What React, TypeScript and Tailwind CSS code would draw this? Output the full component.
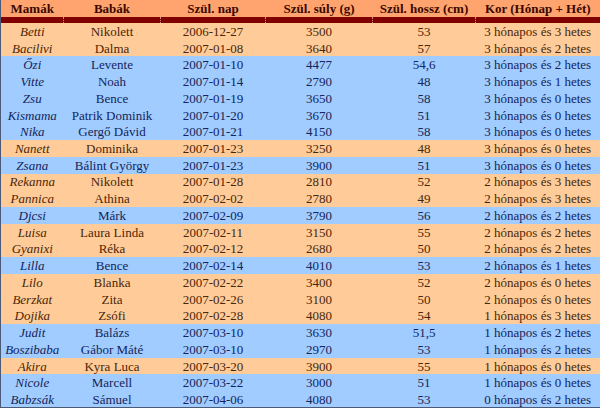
import React from 'react';

type Row = [string, string, string, string, string, string, boolean];

// last field: true = fiú (kék sor)
const rows: Row[] = [
    ['Betti', 'Nikolett', '2006-12-27', '3500', '53', '3 hónapos és 3 hetes', false],
    ['Bacilivi', 'Dalma', '2007-01-08', '3640', '57', '3 hónapos és 2 hetes', false],
    ['Őzi', 'Levente', '2007-01-10', '4477', '54,6', '3 hónapos és 2 hetes', true],
    ['Vitte', 'Noah', '2007-01-14', '2790', '48', '3 hónapos és 1 hetes', true],
    ['Zsu', 'Bence', '2007-01-19', '3650', '58', '3 hónapos és 0 hetes', true],
    ['Kismama', 'Patrik Dominik', '2007-01-20', '3670', '51', '3 hónapos és 0 hetes', true],
    ['Nika', 'Gergő Dávid', '2007-01-21', '4150', '58', '3 hónapos és 0 hetes', true],
    ['Nanett', 'Dominika', '2007-01-23', '3250', '48', '3 hónapos és 0 hetes', false],
    ['Zsana', 'Bálint György', '2007-01-23', '3900', '51', '3 hónapos és 0 hetes', true],
    ['Rekanna', 'Nikolett', '2007-01-28', '2810', '52', '2 hónapos és 3 hetes', false],
    ['Pannica', 'Athina', '2007-02-02', '2780', '49', '2 hónapos és 3 hetes', false],
    ['Djcsi', 'Márk', '2007-02-09', '3790', '56', '2 hónapos és 2 hetes', true],
    ['Luisa', 'Laura Linda', '2007-02-11', '3150', '55', '2 hónapos és 2 hetes', false],
    ['Gyanixi', 'Réka', '2007-02-12', '2680', '50', '2 hónapos és 2 hetes', false],
    ['Lilla', 'Bence', '2007-02-14', '4010', '53', '2 hónapos és 1 hetes', true],
    ['Lilo', 'Blanka', '2007-02-22', '3400', '52', '2 hónapos és 0 hetes', false],
    ['Berzkat', 'Zita', '2007-02-26', '3100', '50', '2 hónapos és 0 hetes', false],
    ['Dojika', 'Zsófi', '2007-02-28', '4080', '54', '1 hónapos és 3 hetes', false],
    ['Judit', 'Balázs', '2007-03-10', '3630', '51,5', '1 hónapos és 2 hetes', true],
    ['Boszibaba', 'Gábor Máté', '2007-03-10', '2970', '53', '1 hónapos és 2 hetes', true],
    ['Akira', 'Kyra Luca', '2007-03-20', '3900', '55', '1 hónapos és 0 hetes', false],
    ['Nicole', 'Marcell', '2007-03-22', '3000', '51', '1 hónapos és 0 hetes', true],
    ['Babzsák', 'Sámuel', '2007-04-06', '4080', '53', '0 hónapos és 2 hetes', true],
];

const headers = ['Mamák', 'Babák', 'Szül. nap', 'Szül. súly (g)', 'Szül. hossz (cm)', 'Kor (Hónap + Hét)'];

const cell = "p-0 text-center whitespace-nowrap [font-family:'Liberation_Serif',serif]";

const App: React.FC = () => {
    return (
        <div className="w-[600px] h-[410px] bg-white [font-family:'Liberation_Serif',serif]">
            <table className="w-[600px] table-fixed border-collapse border-x border-b border-[#4a5a78] [font-family:'Liberation_Serif',serif] text-[13px] leading-none">
                <colgroup>
                    <col className="w-[63px]" />
                    <col className="w-[97px]" />
                    <col className="w-[105px]" />
                    <col className="w-[107px]" />
                    <col className="w-[103px]" />
                    <col className="w-[125px]" />
                </colgroup>
                <thead>
                    <tr className="h-[17px] bg-[#ffa46e] text-[#3a0800]">
                        {headers.map(h => (
                            <th key={h} className={`${cell} font-bold`}>{h}</th>
                        ))}
                    </tr>
                    <tr className="h-[6px] bg-[#800000]">
                        {headers.map((h, i) => (
                            <td key={h} className={`p-0 ${i < 5 ? 'border-r border-dotted border-[#c89090]' : ''}`}></td>
                        ))}
                    </tr>
                </thead>
                <tbody>
                    {rows.map(r => {
                        const boy = r[6];
                        return (
                            <tr key={r[0]} className={`h-[16.74px] ${boy ? 'bg-[#a0ccff] text-[#15245a]' : 'bg-[#ffcc99] text-[#4a2608]'}`}>
                                <td className={`${cell} italic`}>{r[0]}</td>
                                <td className={cell}>{r[1]}</td>
                                <td className={cell}>{r[2]}</td>
                                <td className={cell}>{r[3]}</td>
                                <td className={cell}>{r[4]}</td>
                                <td className={cell}>{r[5]}</td>
                            </tr>
                        );
                    })}
                </tbody>
            </table>
        </div>
    );
};

export default App;
